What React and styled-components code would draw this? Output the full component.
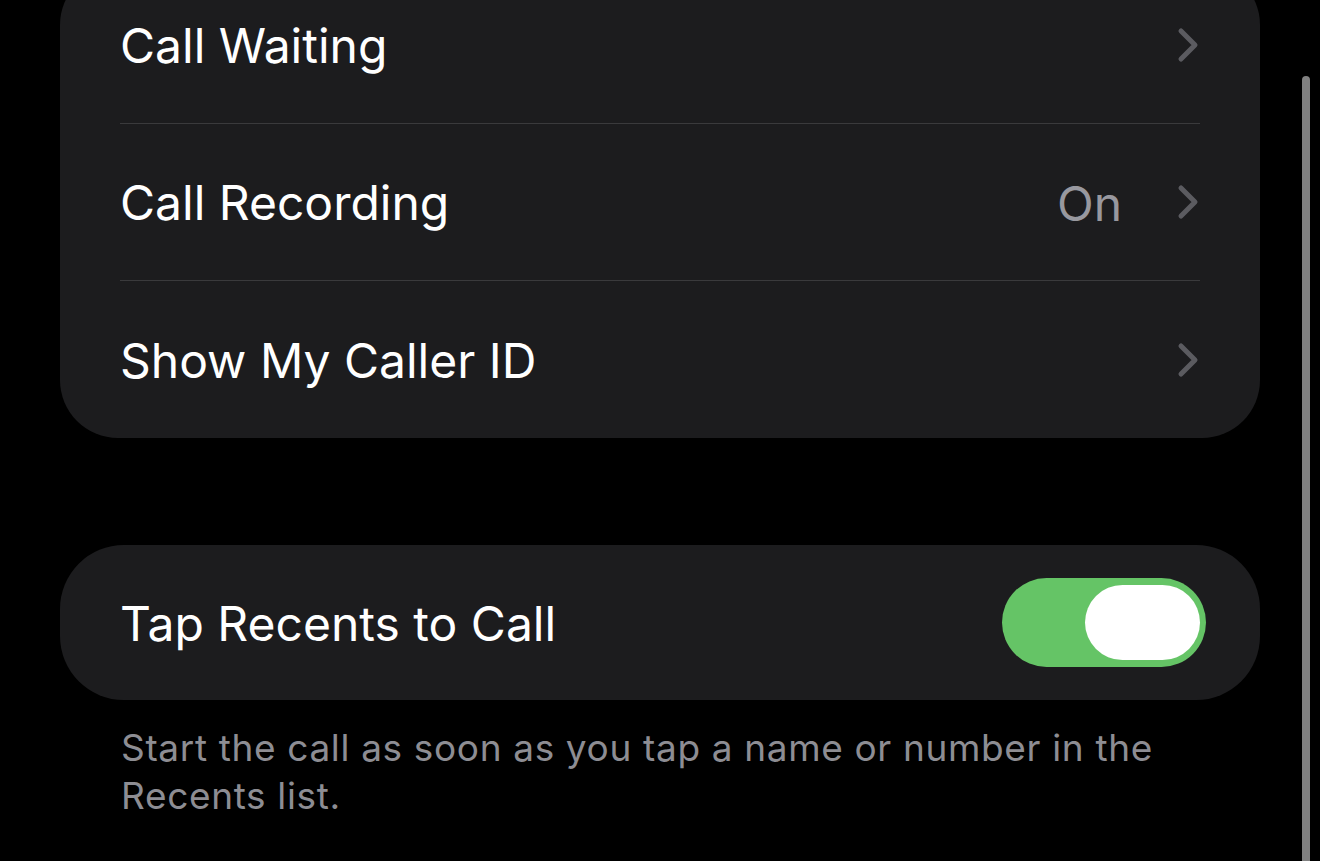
import React from "react";
import styled, { createGlobalStyle } from "styled-components";

const Global = createGlobalStyle`
  html, body { margin: 0; padding: 0; background: #000; }
  body { width: 1320px; height: 861px; overflow: hidden; font-family: Inter, "Open Sans", sans-serif; -webkit-font-smoothing: antialiased; }
`;

const Page = styled.div`
  position: relative;
  width: 1320px;
  height: 861px;
  background: #000;
  overflow: hidden;
`;

const Content = styled.div`
  display: flex;
  flex-direction: column;
  padding: 0 60px;
`;

const Card = styled.div`
  background: #1c1c1e;
  border-radius: ${(p) => p.$radius || 58}px;
  margin-top: ${(p) => p.$mt || 0}px;
  padding: 0 60px;
  display: flex;
  flex-direction: column;
`;

const Row = styled.div`
  height: ${(p) => p.$h || 157}px;
  display: flex;
  align-items: center;
  border-bottom: ${(p) => (p.$last ? "none" : "1px solid #3a3a3c")};
  box-sizing: border-box;
`;

const Label = styled.div`
  flex: 1;
  color: #fff;
  font-size: 48px;
  letter-spacing: 0;
  line-height: 1;
  padding-top: 2px;
`;

const Value = styled.div`
  color: #98989f;
  font-size: 48px;
  margin-right: 54px;
  padding-top: 2px;
`;

const Chevron = () => (
  <svg width="24" height="36" viewBox="0 0 24 36">
    <path d="M5 4 L19 18 L5 32" fill="none" stroke="#5b5b60" strokeWidth="5" strokeLinecap="round" strokeLinejoin="round" />
  </svg>
);

const Toggle = styled.div`
  width: 204px;
  height: 89px;
  border-radius: 45px;
  background: #65c466;
  display: flex;
  align-items: center;
  justify-content: flex-end;
  padding-right: 6px;
  box-sizing: border-box;
  margin-right: -6px;
`;

const Knob = styled.div`
  width: 115px;
  height: 75px;
  border-radius: 38px;
  background: #fff;
`;

const Footer = styled.div`
  color: #8d8d93;
  font-size: 37px;
  line-height: 48px;
  padding: 24px 40px 0 61px;
  letter-spacing: 0.65px;
`;

const Scrollbar = styled.div`
  position: absolute;
  left: 1302px;
  top: 76px;
  width: 8px;
  height: 800px;
  border-radius: 4px;
  background: #808080;
`;

export default function App() {
  return (
    <Page>
      <Global />
      <Content>
        <Card $mt={-33}>
          <Row>
            <Label>Call Waiting</Label>
            <Chevron />
          </Row>
          <Row>
            <Label>Call Recording</Label>
            <Value>On</Value>
            <Chevron />
          </Row>
          <Row $last>
            <Label>Show My Caller ID</Label>
            <Chevron />
          </Row>
        </Card>
        <Card $mt={107} $radius={64}>
          <Row $last $h={155}>
            <Label>Tap Recents to Call</Label>
            <Toggle>
              <Knob />
            </Toggle>
          </Row>
        </Card>
        <Footer>
          Start the call as soon as you tap a name or number in the Recents list.
        </Footer>
      </Content>
      <Scrollbar />
    </Page>
  );
}
